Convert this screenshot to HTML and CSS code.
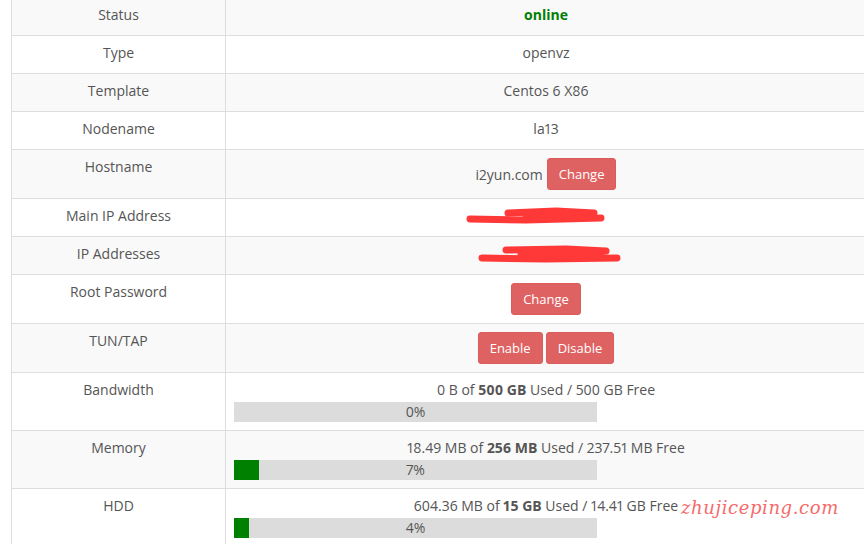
FILE: index.html
```html
<!DOCTYPE html>
<html lang="en">
<head>
    <meta charset="UTF-8">
    <title>VPS Information</title>
    <link rel="stylesheet" href="styles.css">
</head>
<body>
    <div class="panel">
        <table class="info">
            <tr>
                <td class="label">Status</td>
                <td class="value"><span class="online">online</span></td>
            </tr>
            <tr>
                <td class="label">Type</td>
                <td class="value">openvz</td>
            </tr>
            <tr>
                <td class="label">Template</td>
                <td class="value">Centos 6 X86</td>
            </tr>
            <tr>
                <td class="label">Nodename</td>
                <td class="value">la13</td>
            </tr>
            <tr>
                <td class="label">Hostname</td>
                <td class="value">
                    <div class="actions">
                        <span>i2yun.com</span>
                        <button class="btn">Change</button>
                    </div>
                </td>
            </tr>
            <tr>
                <td class="label">Main IP Address</td>
                <td class="value">
                    <svg class="redact" width="160" height="21" viewBox="0 0 160 21">
                        <path d="M4 14 L60 15 L135 13" />
                        <path d="M42 8 L90 6 L128 8" />
                        <path d="M60 11 L120 11" />
                    </svg>
                </td>
            </tr>
            <tr>
                <td class="label">IP Addresses</td>
                <td class="value">
                    <svg class="redact" width="160" height="21" viewBox="0 0 160 21">
                        <path d="M16 15 L80 16 L151 15" />
                        <path d="M40 7 L100 6 L140 8" />
                        <path d="M55 11 L135 12" />
                    </svg>
                </td>
            </tr>
            <tr>
                <td class="label">Root Password</td>
                <td class="value">
                    <div class="actions">
                        <button class="btn">Change</button>
                    </div>
                </td>
            </tr>
            <tr>
                <td class="label">TUN/TAP</td>
                <td class="value">
                    <div class="actions">
                        <button class="btn">Enable</button>
                        <button class="btn">Disable</button>
                    </div>
                </td>
            </tr>
            <tr>
                <td class="label">Bandwidth</td>
                <td class="value">
                    <div>0 B of <b>500 GB</b> Used / 500 GB Free</div>
                    <div class="bar">
                        <div class="fill" style="width: 0%"></div>
                        <span>0%</span>
                    </div>
                </td>
            </tr>
            <tr>
                <td class="label">Memory</td>
                <td class="value">
                    <div>18.49 MB of <b>256 MB</b> Used / 237.51 MB Free</div>
                    <div class="bar">
                        <div class="fill" style="width: 7%"></div>
                        <span>7%</span>
                    </div>
                </td>
            </tr>
            <tr>
                <td class="label">HDD</td>
                <td class="value">
                    <div>604.36 MB of <b>15 GB</b> Used / 14.41 GB Free</div>
                    <div class="bar">
                        <div class="fill" style="width: 4%"></div>
                        <span>4%</span>
                    </div>
                </td>
            </tr>
        </table>
        <div class="watermark">zhujiceping.com</div>
    </div>
</body>
</html>
```

FILE: styles.css
```css
body {
    margin: 0;
    background: #fff;
    font-family: 'Open Sans', sans-serif;
    font-size: 14px;
    font-variant-numeric: proportional-nums;
    color: #555;
    overflow: hidden;
}

.panel {
    position: relative;
    margin-top: -3px;
    padding-left: 11px;
}

.info {
    width: 856px;
    border-collapse: collapse;
}

.info td {
    border: 1px solid #ddd;
    padding: 6px 8px 10px;
    line-height: 21px;
    text-align: center;
    vertical-align: top;
}

.info tr:nth-child(odd) {
    background-color: #f9f9f9;
}

.info .label {
    width: 197px;
}

.online {
    color: #008000;
    font-weight: bold;
}

.actions {
    display: flex;
    justify-content: center;
    align-items: center;
    gap: 3px;
    margin: 2px 0 -2px;
}

.actions span {
    margin-right: 1px;
}

.btn {
    font-family: 'Open Sans', sans-serif;
    font-size: 13px;
    line-height: 20px;
    padding: 5px 11px;
    color: #fff;
    background-color: #df6262;
    border: 1px solid #dc5c5c;
    border-radius: 3px;
    cursor: pointer;
}

.btn:hover {
    background-color: #d24d4d;
}

.redact {
    display: block;
    margin: 0 auto;
}

.redact path {
    fill: none;
    stroke: #ff3838;
    stroke-width: 7;
    stroke-linecap: round;
    stroke-linejoin: round;
}

.bar {
    position: relative;
    width: 363px;
    height: 20px;
    margin: 2px 0 -2px;
    background-color: #dcdcdc;
}

.bar .fill {
    height: 100%;
    background-color: #008000;
}

.bar span {
    position: absolute;
    left: 0;
    right: 0;
    top: 0;
    line-height: 20px;
    text-align: center;
}

.watermark {
    position: absolute;
    left: 681px;
    top: 500px;
    font-family: 'DejaVu Serif', serif;
    font-style: italic;
    font-size: 18px;
    letter-spacing: 0.6px;
    color: #f56b6b;
}
```
